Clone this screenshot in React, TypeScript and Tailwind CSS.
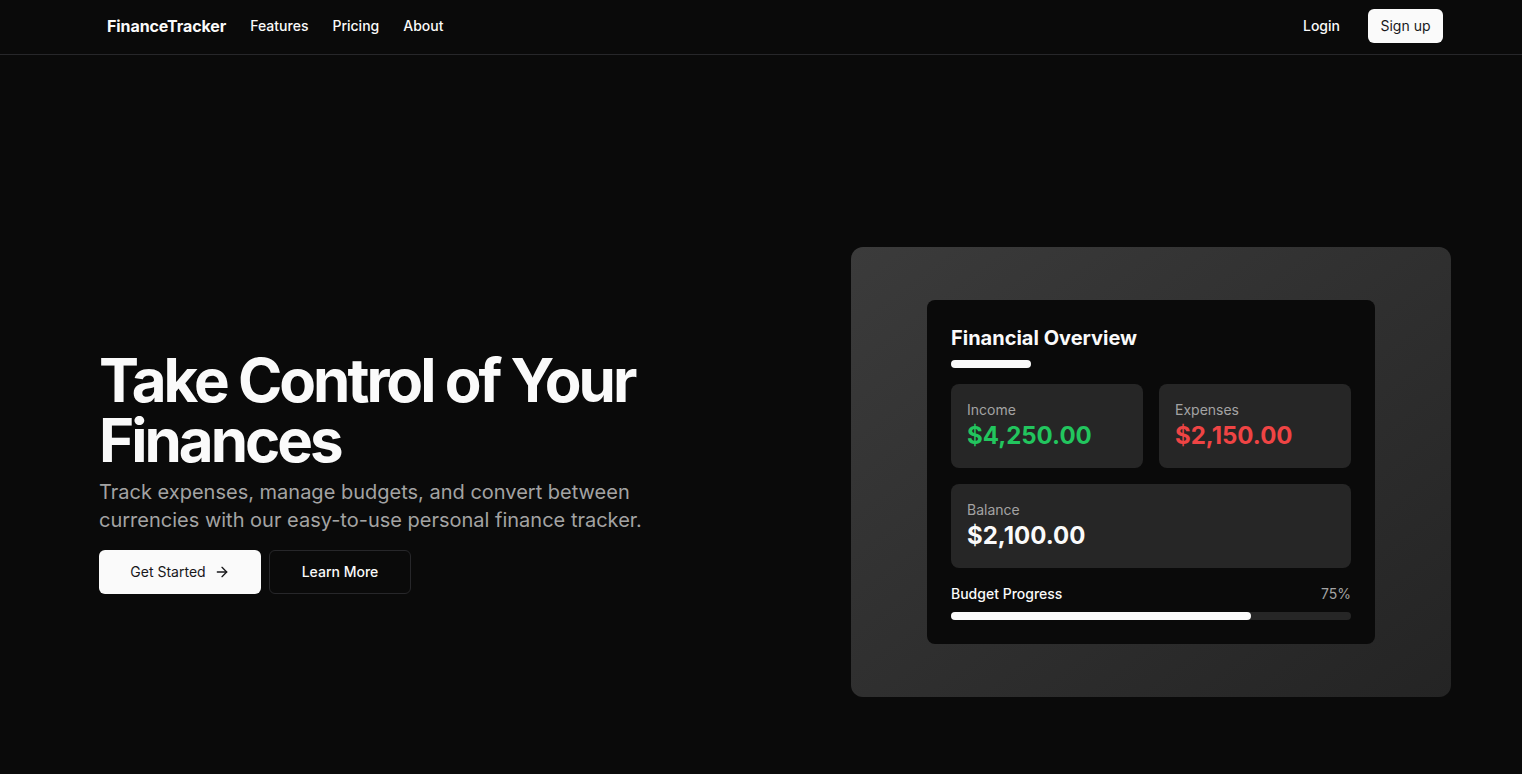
import { ArrowRight } from 'lucide-react';

const font = { fontFamily: 'Inter, "Noto Sans", sans-serif' };

const StatCard = ({ label, value, color }: { label: string; value: string; color: string }) => (
    <div className="rounded-lg bg-[#262626] p-4">
        <p className="text-sm leading-5 text-[#a3a3a3]">{label}</p>
        <p className={`text-2xl leading-8 font-bold ${color}`}>{value}</p>
    </div>
);

const App = () => {
    return <div className="min-h-screen bg-[#0a0a0a] text-[#fafafa]" style={font}>
        <header className="h-[55px] border-b border-[#27272a]">
            <div className="ml-[107px] w-[1336px] h-[52px] flex items-center justify-between">
                <div className="flex items-center gap-6">
                    <span className="text-base font-bold tracking-[-0.005em]">FinanceTracker</span>
                    <nav className="flex items-center gap-6 text-sm font-medium">
                        <a>Features</a>
                        <a>Pricing</a>
                        <a>About</a>
                    </nav>
                </div>
                <div className="flex items-center gap-7">
                    <a className="text-sm font-medium">Login</a>
                    <button className="h-[34px] w-[75px] rounded-md bg-[#fafafa] text-sm text-[#18181b]">Sign up</button>
                </div>
            </div>
        </header>

        <section className="pt-[192px] pb-[77px]">
            <div className="ml-[99px] w-[1352px] flex items-center justify-between">
                <div className="flex flex-col">
                    <h1 className="text-6xl leading-[60px] font-bold tracking-[-0.05em]">
                        Take Control of Your<br />Finances
                    </h1>
                    <p className="mt-2 max-w-[600px] text-xl leading-7 text-[#a3a3a3]">
                        Track expenses, manage budgets, and convert between currencies with our easy-to-use personal finance tracker.
                    </p>
                    <div className="mt-4 flex gap-2">
                        <button className="h-11 w-[162px] rounded-md bg-[#fafafa] text-sm text-[#18181b] flex items-center justify-center gap-2">
                            Get Started <ArrowRight className="w-4 h-4" />
                        </button>
                        <button className="h-11 w-[142px] rounded-md border border-[#27272a] text-sm font-medium">
                            Learn More
                        </button>
                    </div>
                </div>

                <div className="w-[600px] h-[450px] rounded-xl bg-gradient-to-br from-[#3b3b3b] to-[#242424] flex items-center justify-center">
                    <div className="w-[448px] rounded-lg bg-[#0a0a0a] p-6">
                        <h3 className="text-xl leading-7 font-bold">Financial Overview</h3>
                        <div className="mt-2 h-2 w-20 rounded-full bg-[#fafafa]"></div>
                        <div className="mt-4 grid grid-cols-2 gap-4">
                            <StatCard label="Income" value="$4,250.00" color="text-[#22c55e]" />
                            <StatCard label="Expenses" value="$2,150.00" color="text-[#ef4444]" />
                            <div className="col-span-2">
                                <StatCard label="Balance" value="$2,100.00" color="text-[#fafafa]" />
                            </div>
                        </div>
                        <div className="mt-4 flex justify-between text-sm leading-5">
                            <span className="font-medium">Budget Progress</span>
                            <span className="text-[#a3a3a3]">75%</span>
                        </div>
                        <div className="mt-2 h-2 w-full rounded-full bg-[#262626]">
                            <div className="h-2 rounded-full bg-[#fafafa]" style={{ width: '75%' }}></div>
                        </div>
                    </div>
                </div>
            </div>
        </section>
    </div>
};

export default App;
